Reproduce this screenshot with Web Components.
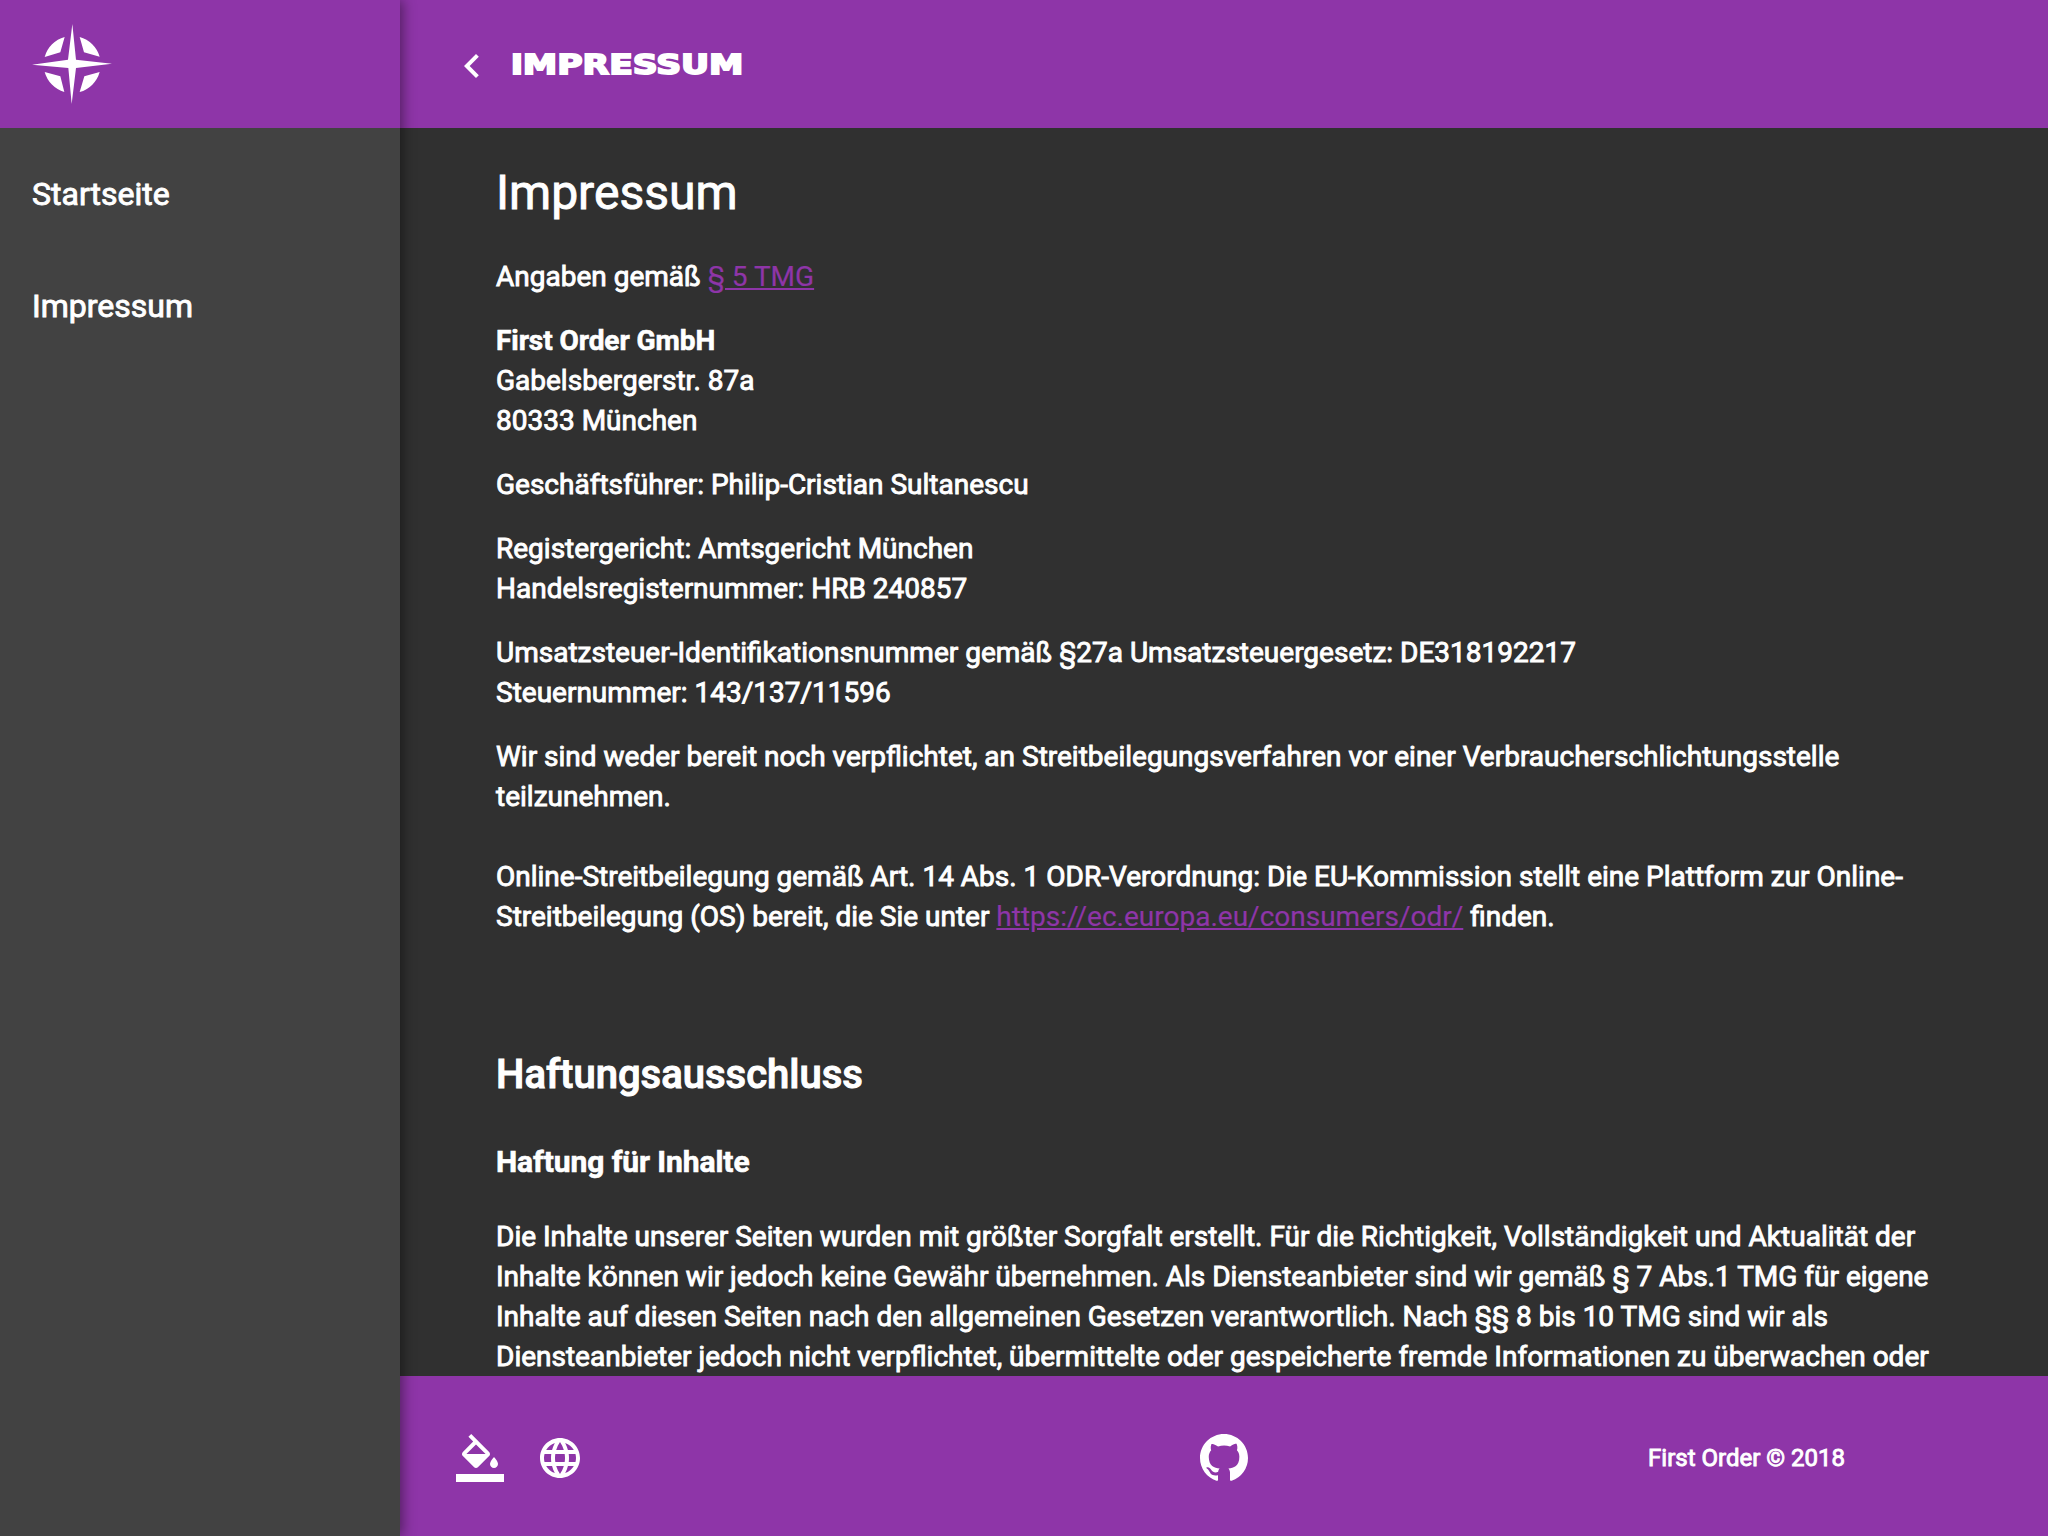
<!DOCTYPE html>
<html lang="de">
<head>
<meta charset="utf-8">
<title>Impressum</title>
<style>
  html, body { margin: 0; height: 100%; }
  body {
    --primary: #8e35a8;
    --background: #303030;
    --surface: #424242;
    font-family: Roboto, "Liberation Sans", sans-serif;
    font-size: 28px;
    line-height: 40px;
    color: #fff;
    background: var(--background);
    overflow: hidden;
  }
</style>
</head>
<body>
<app-shell>
  <side-nav slot="nav">
    <nav-item>Startseite</nav-item>
    <nav-item>Impressum</nav-item>
  </side-nav>
  <page-header slot="header">iMPRESSUM</page-header>
  <imprint-page></imprint-page>
  <page-footer slot="footer">First Order © 2018</page-footer>
</app-shell>

<script>
// Icon paths
const icons = {
  back: `<svg viewBox="0 0 24 24"><path d="M15.41 7.41 14 6l-6 6 6 6 1.41-1.41L10.83 12z"/></svg>`,
  fill: `<svg viewBox="0 0 24 24"><path d="M16.56 8.94 7.62 0 6.21 1.41l2.38 2.38-5.15 5.15c-.59.59-.59 1.54 0 2.12l5.5 5.5c.29.29.68.44 1.06.44s.77-.15 1.06-.44l5.5-5.5c.59-.58.59-1.53 0-2.12zM5.21 10 10 5.21 14.79 10H5.21zM19 11.5s-2 2.17-2 3.5c0 1.1.9 2 2 2s2-.9 2-2c0-1.33-2-3.5-2-3.5z"/><path d="M0 20h24v4H0z"/></svg>`,
  language: `<svg viewBox="0 0 24 24"><path d="M11.99 2C6.47 2 2 6.48 2 12s4.47 10 9.99 10C17.52 22 22 17.52 22 12S17.52 2 11.99 2zm6.93 6h-2.95c-.32-1.25-.78-2.45-1.38-3.56 1.84.63 3.37 1.91 4.33 3.56zM12 4.04c.83 1.2 1.48 2.53 1.91 3.96h-3.82c.43-1.43 1.08-2.76 1.91-3.96zM4.26 14C4.1 13.36 4 12.69 4 12s.1-1.36.26-2h3.38c-.08.66-.14 1.32-.14 2 0 .68.06 1.34.14 2H4.26zm.82 2h2.95c.32 1.25.78 2.45 1.38 3.56-1.84-.63-3.37-1.9-4.33-3.56zm2.95-8H5.08c.96-1.66 2.49-2.93 4.33-3.56C8.81 5.55 8.35 6.75 8.03 8zM12 19.96c-.83-1.2-1.48-2.53-1.91-3.96h3.82c-.43 1.43-1.08 2.76-1.91 3.96zM14.34 14H9.66c-.09-.66-.16-1.32-.16-2 0-.68.07-1.35.16-2h4.68c.09.65.16 1.32.16 2 0 .68-.07 1.34-.16 2zm.25 5.56c.6-1.11 1.06-2.31 1.38-3.56h2.95c-.96 1.65-2.49 2.93-4.33 3.56zM16.36 14c.08-.66.14-1.32.14-2 0-.68-.06-1.34-.14-2h3.38c.16.64.26 1.31.26 2s-.1 1.36-.26 2h-3.38z"/></svg>`,
  github: `<svg viewBox="0 0 16 16"><path d="M8 0C3.58 0 0 3.58 0 8c0 3.54 2.29 6.53 5.47 7.59.4.07.55-.17.55-.38 0-.19-.01-.82-.01-1.49-2.01.37-2.53-.49-2.69-.94-.09-.23-.48-.94-.82-1.13-.28-.15-.68-.52-.01-.53.63-.01 1.08.58 1.23.82.72 1.21 1.87.87 2.33.66.07-.52.28-.87.51-1.07-1.78-.2-3.64-.89-3.64-3.95 0-.87.31-1.59.82-2.15-.08-.2-.36-1.02.08-2.12 0 0 .67-.21 2.2.82.64-.18 1.32-.27 2-.27s1.36.09 2 .27c1.53-1.04 2.2-.82 2.2-.82.44 1.1.16 1.92.08 2.12.51.56.82 1.27.82 2.15 0 3.07-1.87 3.75-3.65 3.95.29.25.54.73.54 1.48 0 1.07-.01 1.93-.01 2.2 0 .21.15.46.55.38A8.01 8.01 0 0 0 16 8c0-4.42-3.58-8-8-8z"/></svg>`,
  logo: `<svg viewBox="0 0 240 240"><path d="M121 0 132 107 240 119 132 132 119 240 109 132 0 122 108 107z"/><path d="M98 39 85 85 38 99A86 86 0 0 1 98 39zM143 39A86 86 0 0 1 203 98L156 85zM203 144A86 86 0 0 1 143 204L157 157zM38 144 85 157 97 204A86 86 0 0 1 38 144z"/></svg>`,
};

class AppIcon extends HTMLElement {
  shadowRoot = this.attachShadow({ mode: "open" });
  connectedCallback() {
    this.shadowRoot.innerHTML = `
    <style>
      :host { display: block; width: 48px; height: 48px; flex: none; }
      svg { display: block; width: 100%; height: 100%; fill: currentColor; }
    </style>
    ${icons[this.getAttribute("name")]}
    `;
  }
}
customElements.define("app-icon", AppIcon);

class AppShell extends HTMLElement {
  shadowRoot = this.attachShadow({ mode: "open" });
  connectedCallback() {
    this.shadowRoot.innerHTML = `
    <style>
      :host {
        display: grid;
        grid-template-columns: 400px minmax(0, 1fr);
        height: 100vh;
      }
      .content {
        display: grid;
        grid-template-rows: 128px minmax(0, 1fr) 160px;
        height: 100vh;
      }
      main { overflow: hidden; }
    </style>
    <slot name="nav"></slot>
    <div class="content">
      <slot name="header"></slot>
      <main><slot></slot></main>
      <slot name="footer"></slot>
    </div>
    `;
  }
}
customElements.define("app-shell", AppShell);

class SideNav extends HTMLElement {
  shadowRoot = this.attachShadow({ mode: "open" });
  connectedCallback() {
    this.shadowRoot.innerHTML = `
    <style>
      :host {
        display: block;
        position: relative;
        z-index: 1;
        background: var(--surface);
        box-shadow: 3px 0 12px rgba(0, 0, 0, .42);
      }
      .brand {
        display: flex;
        align-items: center;
        height: 128px;
        padding-left: 32px;
        background: var(--primary);
      }
      app-icon { width: 80px; height: 80px; }
      nav { padding-top: 10px; }
    </style>
    <div class="brand"><app-icon name="logo"></app-icon></div>
    <nav><slot></slot></nav>
    `;
  }
}
customElements.define("side-nav", SideNav);

class NavItem extends HTMLElement {
  shadowRoot = this.attachShadow({ mode: "open" });
  connectedCallback() {
    this.shadowRoot.innerHTML = `
    <style>
      :host {
        display: flex;
        align-items: center;
        height: 112px;
        padding: 0 32px;
        font-size: 32px;
        -webkit-text-stroke: .9px;
      }
    </style>
    <slot></slot>
    `;
  }
}
customElements.define("nav-item", NavItem);

class PageHeader extends HTMLElement {
  shadowRoot = this.attachShadow({ mode: "open" });
  connectedCallback() {
    this.shadowRoot.innerHTML = `
    <style>
      :host {
        display: flex;
        align-items: center;
        gap: 15px;
        padding-left: 48px;
        background: var(--primary);
      }
      app-icon { margin-top: 4px; }
      .title {
        margin-top: 2px;
        font: bold 27px/40px "DejaVu Sans", sans-serif;
        transform: scaleX(1.28);
        transform-origin: left;
        -webkit-text-stroke: 1.8px;
      }
    </style>
    <app-icon name="back"></app-icon>
    <span class="title"><slot></slot></span>
    `;
  }
}
customElements.define("page-header", PageHeader);

class ImprintPage extends HTMLElement {
  shadowRoot = this.attachShadow({ mode: "open" });
  connectedCallback() {
    this.shadowRoot.innerHTML = `
    <style>
      :host {
        display: block;
        padding: 33px 96px;
        -webkit-text-stroke: .9px;
      }
      h1 { font-size: 48px; font-weight: 400; line-height: 64px; margin: 0 0 32px; }
      h2 { font-size: 40px; font-weight: 500; line-height: 64px; margin: 106px 0 31px; -webkit-text-stroke: 1px; }
      h3 { font-size: 30px; font-weight: 700; line-height: 48px; letter-spacing: -.08px; margin: 0 0 31px; -webkit-text-stroke: .6px; }
      p { margin: 0 0 24px; }
      a { color: var(--primary); -webkit-text-stroke: .2px; }
      b { letter-spacing: -.06px; -webkit-text-stroke: .6px; }
    </style>
    <h1>Impressum</h1>
    <p>Angaben gemäß <a href="#">§ 5 TMG</a></p>
    <p><b>First Order GmbH</b><br>Gabelsbergerstr. 87a<br>80333 München</p>
    <p>Geschäftsführer: Philip-Cristian Sultanescu</p>
    <p>Registergericht: Amtsgericht München<br>Handelsregisternummer: HRB 240857</p>
    <p>Umsatzsteuer-Identifikationsnummer gemäß §27a Umsatzsteuergesetz: DE318192217<br>Steuernummer: 143/137/11596</p>
    <p>Wir sind weder bereit noch verpflichtet, an Streitbeilegungsverfahren vor einer Verbraucherschlichtungsstelle teilzunehmen.<br><br>Online-Streitbeilegung gemäß Art. 14 Abs. 1 ODR-Verordnung: Die EU-Kommission stellt eine Plattform zur Online-<br>Streitbeilegung (OS) bereit, die Sie unter <a href="#">https://ec.europa.eu/consumers/odr/</a> finden.</p>
    <h2>Haftungsausschluss</h2>
    <h3>Haftung für Inhalte</h3>
    <p>Die Inhalte unserer Seiten wurden mit größter Sorgfalt erstellt. Für die Richtigkeit, Vollständigkeit und Aktualität der Inhalte können wir jedoch keine Gewähr übernehmen. Als Diensteanbieter sind wir gemäß § 7 Abs.1 TMG für eigene Inhalte auf diesen Seiten nach den allgemeinen Gesetzen verantwortlich. Nach §§ 8 bis 10 TMG sind wir als Diensteanbieter jedoch nicht verpflichtet, übermittelte oder gespeicherte fremde Informationen zu überwachen oder</p>
    `;
  }
}
customElements.define("imprint-page", ImprintPage);

class PageFooter extends HTMLElement {
  shadowRoot = this.attachShadow({ mode: "open" });
  connectedCallback() {
    this.shadowRoot.innerHTML = `
    <style>
      :host {
        display: grid;
        grid-template-columns: 1fr auto 1fr;
        align-items: center;
        padding-top: 4px;
        box-sizing: border-box;
        background: var(--primary);
      }
      .actions { display: flex; gap: 32px; padding-left: 56px; }
      .copyright {
        justify-self: end;
        padding-right: 203px;
        font-size: 24px;
        -webkit-text-stroke: .9px;
      }
    </style>
    <div class="actions">
      <app-icon name="fill"></app-icon>
      <app-icon name="language"></app-icon>
    </div>
    <app-icon name="github"></app-icon>
    <div class="copyright"><slot></slot></div>
    `;
  }
}
customElements.define("page-footer", PageFooter);
</script>
</body>
</html>
